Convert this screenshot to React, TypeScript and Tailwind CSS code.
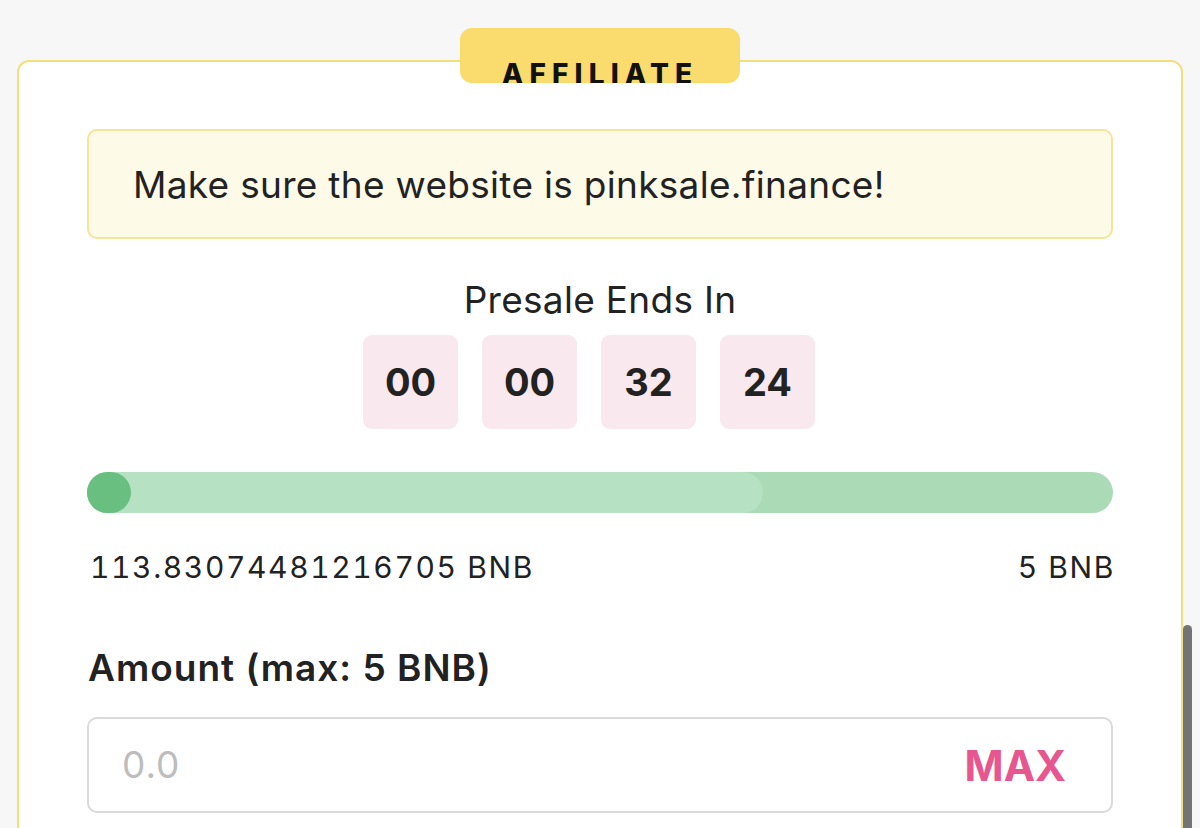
export default function App() {
  const time = ["00", "00", "32", "24"]

  return (
    <div
      className="relative h-[828px] w-[1200px] overflow-hidden bg-[#f7f7f8] text-[#222222]"
      style={{ fontFamily: "Inter, 'Liberation Sans', sans-serif" }}
    >
      <div className="relative mx-[17px] mt-[60px] h-[900px] rounded-[12px] border-2 border-[#f5de7e] bg-white px-[68px] pt-[67px]">
        {/* badge over the top border */}
        <div className="absolute left-[441px] top-[-34px] flex h-[55px] w-[280px] items-end justify-center overflow-hidden rounded-[12px] bg-[#f9dc6d]">
          <span className="translate-y-[5px] text-[28px] font-extrabold leading-none tracking-[0.22em] text-[#111111]">
            AFFILIATE
          </span>
        </div>

        <div className="flex h-[110px] items-center rounded-[10px] border-2 border-[#f6e49d] bg-[#fefae8] pl-[44px]">
          <p className="text-[37px] leading-none tracking-[0.3px]">Make sure the website is pinksale.finance!</p>
        </div>

        <p className="mt-[41px] text-center text-[37px] leading-[40px] tracking-[0.3px]">Presale Ends In</p>

        <div className="mt-[15px] flex justify-center gap-[24px] pr-[22px]">
          {time.map((t, i) => (
            <div
              key={i}
              className="flex h-[94px] w-[95px] items-center justify-center rounded-[9px] bg-[#f9e8ee] text-[38px] font-bold"
            >
              {t}
            </div>
          ))}
        </div>

        <div className="relative mt-[43px] h-[41px] rounded-full bg-[#aadab6]">
          <div className="absolute inset-y-0 left-0 w-[676px] rounded-full bg-[#b6e2c3]" />
          <div className="absolute inset-y-0 left-0 w-[44px] rounded-full bg-[#69bf7f]" />
        </div>

        <div className="mt-[34px] flex justify-between text-[30px] leading-[40px] tracking-[1.6px] tabular-nums">
          <span className="pl-[3px]">113.83074481216705 BNB</span>
          <span className="-mr-[2px]">5 BNB</span>
        </div>

        <p className="mt-[61px] pl-[1px] text-[37px] font-semibold leading-[40px] tracking-[1px]">Amount (max: 5 BNB)</p>

        <div className="mt-[29px] flex h-[96px] items-center justify-between rounded-[10px] border-2 border-[#dadada] pl-[33px] pr-[45px]">
          <span className="text-[37px] tracking-[1px] text-[#bdbdbd]">0.0</span>
          <span className="text-[42px] font-bold text-[#e8568f]">MAX</span>
        </div>
      </div>

      <div className="absolute left-[1183px] top-[625px] h-[220px] w-[9px] rounded-full bg-[#737477]" />
    </div>
  )
}
